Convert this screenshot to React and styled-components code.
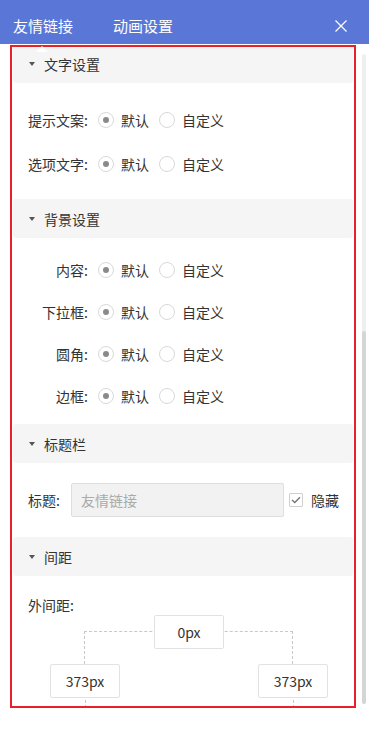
import React from "react";
import styled, { createGlobalStyle } from "styled-components";

const Global = createGlobalStyle`
  html, body { margin: 0; padding: 0; background: #fff; }
  body { font-family: "Noto Sans CJK SC", "Noto Sans", sans-serif; color: #333; }
  * { box-sizing: border-box; }
`;

const Page = styled.div`
  width: 369px;
  height: 729px;
  background: #fff;
  overflow: hidden;
`;

const Header = styled.div`
  height: 44px;
  background: #5a77d8;
  display: flex;
  align-items: center;
  padding: 7px 22px 0 13px;
`;

const Tab = styled.div`
  position: relative;
  font-size: 15px;
  line-height: 20px;
  color: #fff;
  margin-right: 40px;
`;

const TabPointer = styled.span`
  position: absolute;
  left: 50%;
  top: 30px;
  margin-left: -7px;
  width: 0;
  height: 0;
  border-left: 6px solid transparent;
  border-right: 6px solid transparent;
  border-bottom: 6px solid #fff;
  z-index: 2;
`;

const Close = styled.div`
  margin-left: auto;
  display: flex;
  align-items: center;
`;

const Body = styled.div`
  display: flex;
  align-items: flex-start;
`;

const Frame = styled.div`
  margin: 1px 0 0 10px;
  width: 346px;
  height: 663px;
  border: 2px solid #e8202a;
  overflow: hidden;
`;

const ScrollContent = styled.div`
  margin-top: -3px;
`;

const Scrollbar = styled.div`
  margin: 10px 0 0 6px;
  width: 4px;
  height: 650px;
  border-radius: 2px;
  background: #efefef;
  display: flex;
  flex-direction: column;
`;

const Thumb = styled.div`
  flex: 1;
  border-radius: 2px;
  background: #d5d5d5;
`;

const SectionHeader = styled.div`
  height: 39px;
  margin: 0 1px;
  background: #f5f5f5;
  border-radius: 3px;
  display: flex;
  align-items: center;
  padding-left: 16px;
  font-size: 14px;
  color: #333;
`;

const Caret = styled.span`
  width: 0;
  height: 0;
  border-left: 3.5px solid transparent;
  border-right: 3.5px solid transparent;
  border-top: 4px solid #555;
  margin-right: 9px;
`;

const SectionBody = styled.div`
  display: flex;
  flex-direction: column;
  gap: ${(p) => p.$gap || 0}px;
  padding: ${(p) => p.$pt}px 0 ${(p) => p.$pb}px 16px;
`;

const Row = styled.div`
  height: ${(p) => p.$height || 30}px;
  display: flex;
  align-items: center;
  font-size: 14px;
`;

const Label = styled.div`
  width: ${(p) => (p.$width ? `${p.$width}px` : "auto")};
  margin-right: ${(p) => p.$gap}px;
  text-align: right;
  font-size: 14px;
  color: #333;
  white-space: nowrap;
  flex: none;
`;

const Option = styled.label`
  display: flex;
  align-items: center;
  margin-right: 10px;
  color: #333;
  font-size: 14px;
`;

const RadioCircle = styled.span`
  width: 16px;
  height: 16px;
  border-radius: 50%;
  border: 1px solid #d9d9d9;
  background: #fff;
  display: flex;
  align-items: center;
  justify-content: center;
  margin-right: 7px;
  &::after {
    content: "";
    width: 6px;
    height: 6px;
    border-radius: 50%;
    background: ${(p) => (p.$checked ? "#8a8a8a" : "transparent")};
  }
`;

const TextInput = styled.div`
  width: 213px;
  height: 34px;
  background: #f2f2f2;
  border: 1px solid #dedede;
  border-radius: 2px;
  display: flex;
  align-items: center;
  padding-left: 9px;
  color: #aaa;
  font-size: 14px;
`;

const CheckBox = styled.span`
  width: 14px;
  height: 14px;
  margin-left: 5px;
  border: 1px solid #cfcfcf;
  border-radius: 1px;
  display: flex;
  align-items: center;
  justify-content: center;
  background: #fff;
`;

const CheckLabel = styled.span`
  margin-left: 8px;
  font-size: 14px;
  color: #333;
`;

const SpacingLabel = styled.div`
  font-size: 14px;
  line-height: 20px;
  color: #333;
`;

const Diagram = styled.div`
  width: 278px;
  margin-left: 22px;
  display: grid;
  grid-template-columns: 70px 1fr 70px;
  grid-template-rows: 34px 15px 34px 20px;
`;

const Connector = styled.div`
  grid-column: 1 / -1;
  grid-row: 1 / 3;
  margin: 16px 35px 0 34px;
  border-top: 1px dashed #c8c8c8;
  border-left: 1px dashed #c8c8c8;
  border-right: 1px dashed #c8c8c8;
`;

const Tail = styled.div`
  grid-row: 4;
  grid-column: ${(p) => p.$col};
  justify-self: center;
  width: 0;
  margin-top: 2px;
  border-left: 1px dashed #c8c8c8;
`;

const ValueBox = styled.div`
  grid-column: ${(p) => p.$col};
  grid-row: ${(p) => p.$row};
  width: 70px;
  height: 34px;
  justify-self: center;
  background: #fff;
  border: 1px solid #e2e2e2;
  border-radius: 2px;
  display: flex;
  align-items: center;
  justify-content: center;
  font-size: 14px;
  color: #333;
  z-index: 1;
`;

function Radio({ checked, children }) {
  return (
    <Option>
      <RadioCircle $checked={checked} />
      {children}
    </Option>
  );
}

function RadioRow({ label }) {
  return (
    <Row>
      <Label $width={60} $gap={10}>{label}</Label>
      <Radio checked>默认</Radio>
      <Radio>自定义</Radio>
    </Row>
  );
}

function Section({ title }) {
  return (
    <SectionHeader>
      <Caret />
      {title}
    </SectionHeader>
  );
}

export default function App() {
  return (
    <Page>
      <Global />
      <Header>
        <Tab>
          友情链接
          <TabPointer />
        </Tab>
        <Tab>动画设置</Tab>
        <Close>
          <svg width="12" height="12" viewBox="0 0 12 12">
            <path d="M0.5 0.5 L11.5 11.5 M11.5 0.5 L0.5 11.5" stroke="#fff" strokeWidth="1.2" fill="none" />
          </svg>
        </Close>
      </Header>
      <Body>
        <Frame>
          <ScrollContent>
            <Section title="文字设置" />
            <SectionBody $pt={22} $pb={20} $gap={14}>
              <RadioRow label="提示文案:" />
              <RadioRow label="选项文字:" />
            </SectionBody>

            <Section title="背景设置" />
            <SectionBody $pt={17} $pb={13} $gap={12}>
              <RadioRow label="内容:" />
              <RadioRow label="下拉框:" />
              <RadioRow label="圆角:" />
              <RadioRow label="边框:" />
            </SectionBody>

            <Section title="标题栏" />
            <SectionBody $pt={20} $pb={20}>
              <Row $height={34}>
                <Label $gap={11}>标题:</Label>
                <TextInput>友情链接</TextInput>
                <CheckBox>
                  <svg width="10" height="8" viewBox="0 0 10 8">
                    <path d="M1 4 L3.8 6.6 L9 1.2" stroke="#777" strokeWidth="1.4" fill="none" />
                  </svg>
                </CheckBox>
                <CheckLabel>隐藏</CheckLabel>
              </Row>
            </SectionBody>

            <Section title="间距" />
            <SectionBody $pt={19} $pb={0}>
              <SpacingLabel>外间距:</SpacingLabel>
              <Diagram>
                <Connector />
                <ValueBox $col={2} $row={1}>0px</ValueBox>
                <ValueBox $col={1} $row={3}>373px</ValueBox>
                <ValueBox $col={3} $row={3}>373px</ValueBox>
                <Tail $col={1} />
                <Tail $col={3} />
              </Diagram>
            </SectionBody>
          </ScrollContent>
        </Frame>
        <Scrollbar>
          <Thumb style={{ marginTop: 277 }} />
        </Scrollbar>
      </Body>
    </Page>
  );
}
